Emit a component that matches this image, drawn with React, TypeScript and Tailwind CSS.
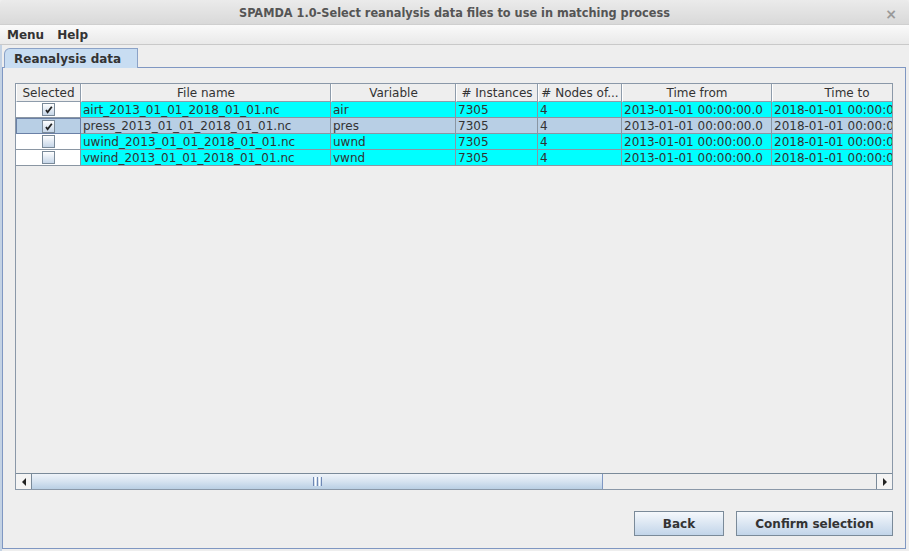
import React from "react";

const rows = [
  { sel: true, file: "airt_2013_01_01_2018_01_01.nc", v: "air", active: false },
  { sel: true, file: "press_2013_01_01_2018_01_01.nc", v: "pres", active: true },
  { sel: false, file: "uwind_2013_01_01_2018_01_01.nc", v: "uwnd", active: false },
  { sel: false, file: "vwind_2013_01_01_2018_01_01.nc", v: "vwnd", active: false },
];

const headers = [
  { t: "Selected", w: "w-[65px]" },
  { t: "File name", w: "w-[250px]" },
  { t: "Variable", w: "w-[125px]" },
  { t: "# Instances", w: "w-[82px]" },
  { t: "# Nodes of...", w: "w-[84px]" },
  { t: "Time from", w: "w-[150px]" },
  { t: "Time to", w: "w-[150px]" },
];

function Check({ on }: { on: boolean }) {
  return (
    <div className="w-[13px] h-[13px] border border-[#7a8a99] bg-gradient-to-b from-[#ffffff] to-[#c6d6e8] flex items-center justify-center">
      {on && (
        <svg width="9" height="9" viewBox="0 0 9 9">
          <path d="M2 5 L3.6 7.2 L7.8 1.8" stroke="#222" strokeWidth="1.8" fill="none" />
        </svg>
      )}
    </div>
  );
}

export default function App() {
  return (
    <div className="w-[909px] h-[551px] flex flex-col bg-[#eeeeee] font-['DejaVu_Sans',sans-serif] text-[12px] text-[#333333] overflow-hidden">
      {/* Title bar */}
      <div className="h-[25px] shrink-0 relative flex items-center justify-center pt-[3px] bg-gradient-to-b from-[#ebebeb] to-[#d9d9d9] rounded-tl-[4px] rounded-tr-[4px] border-b border-[#cfcfcf]">
        <span className="font-['DejaVu_Sans_Condensed',sans-serif] font-bold text-[12.6px] text-[#555555]">
          SPAMDA 1.0-Select reanalysis data files to use in matching process
        </span>
        <span className="absolute right-[12px] top-[4px] text-[#9a9a9a] font-bold text-[14px]">×</span>
      </div>
      {/* Menu bar */}
      <div className="h-[20px] shrink-0 flex items-center gap-[13px] px-[7px] bg-gradient-to-b from-[#fafafa] to-[#e9e9e9] border-b border-[#c9c9c9] font-bold text-[#333333]">
        <span>Menu</span>
        <span>Help</span>
      </div>
      {/* Body */}
      <div className="flex-1 flex flex-col pr-[3px] pb-[3px] border-l-2 border-[#c3d2e4] bg-[#eeeeee]">
        <div className="h-[22px] shrink-0 flex items-end pl-[2px] pt-[3px]">
          <div className="relative z-10 -mb-px h-[20px] w-[134px] bg-[#c8ddf2] border-t border-l border-r border-[#8ba2c7] rounded-tl-[6px] flex items-center pl-[9px] font-bold text-[#333333]">
            Reanalysis data
          </div>
        </div>
        <div className="flex-1 flex flex-col border border-[#7f97c2] pt-[15px] pl-[12px] pr-[12px] pb-[12px]">
          {/* Scroll pane */}
          <div className="h-[407px] shrink-0 flex flex-col border border-[#8a98a8]">
            <div className="flex-1 overflow-hidden">
              <div className="flex h-[18px] w-max">
                {headers.map((h) => (
                  <div
                    key={h.t}
                    className={`${h.w} shrink-0 h-full border-r border-b border-[#8e9cab] border-l border-l-white flex items-center justify-center whitespace-nowrap overflow-hidden`}
                  >
                    {h.t}
                  </div>
                ))}
              </div>
              {rows.map((r) => {
                const bg = r.active ? "bg-[#b8cfe5]" : "bg-[#00ffff]";
                const cell = `shrink-0 h-full border-r border-b border-[#8a96a3] pl-[2px] flex items-center whitespace-nowrap overflow-hidden ${bg}`;
                return (
                  <div key={r.file} className="flex h-[16px] w-max">
                    <div
                      className={`w-[65px] shrink-0 h-full flex items-center justify-center ${
                        r.active
                          ? "bg-[#b8cfe5] border border-[#6a80a6]"
                          : "bg-white border-r border-b border-[#8a96a3]"
                      }`}
                    >
                      <Check on={r.sel} />
                    </div>
                    <div className={`w-[250px] ${cell}`}>{r.file}</div>
                    <div className={`w-[125px] ${cell}`}>{r.v}</div>
                    <div className={`w-[82px] ${cell}`}>7305</div>
                    <div className={`w-[84px] ${cell}`}>4</div>
                    <div className={`w-[150px] ${cell}`}>2013-01-01 00:00:00.0</div>
                    <div className={`w-[150px] ${cell}`}>2018-01-01 00:00:00.0</div>
                  </div>
                );
              })}
            </div>
            {/* Horizontal scrollbar */}
            <div className="h-[16px] shrink-0 flex border-t border-[#7a8a99] bg-[#eeeeee]">
              <div className="w-[16px] shrink-0 h-full bg-[#f4f4f4] border-r border-[#7a8a99] flex items-center justify-center">
                <svg width="6" height="8" viewBox="0 0 6 8">
                  <path d="M5 0 L5 8 L1 4 Z" fill="#222" />
                </svg>
              </div>
              <div className="w-[571px] shrink-0 h-full bg-gradient-to-b from-[#eef3f9] via-[#d6e3f0] to-[#b9cfe4] border-r border-[#7f97c2] flex items-center justify-center">
                <div className="flex gap-[1px] h-[9px]">
                  <div className="w-[1px] bg-[#6f88b5]" />
                  <div className="w-[1px] bg-white" />
                  <div className="w-[1px] bg-[#6f88b5]" />
                  <div className="w-[1px] bg-white" />
                  <div className="w-[1px] bg-[#6f88b5]" />
                </div>
              </div>
              <div className="flex-1" />
              <div className="w-[16px] shrink-0 h-full bg-[#f4f4f4] border-l border-[#7a8a99] flex items-center justify-center">
                <svg width="6" height="8" viewBox="0 0 6 8">
                  <path d="M1 0 L1 8 L5 4 Z" fill="#222" />
                </svg>
              </div>
            </div>
          </div>
          {/* Buttons */}
          <div className="mt-[21px] flex justify-end gap-[12px]">
            <button className="w-[90px] h-[25px] border border-[#7a8a99] bg-gradient-to-b from-[#f5f8fc] to-[#c2d5e9] font-bold text-[#333333]">
              Back
            </button>
            <button className="w-[157px] h-[25px] border border-[#7a8a99] bg-gradient-to-b from-[#f5f8fc] to-[#c2d5e9] font-bold text-[#333333]">
              Confirm selection
            </button>
          </div>
        </div>
      </div>
    </div>
  );
}
